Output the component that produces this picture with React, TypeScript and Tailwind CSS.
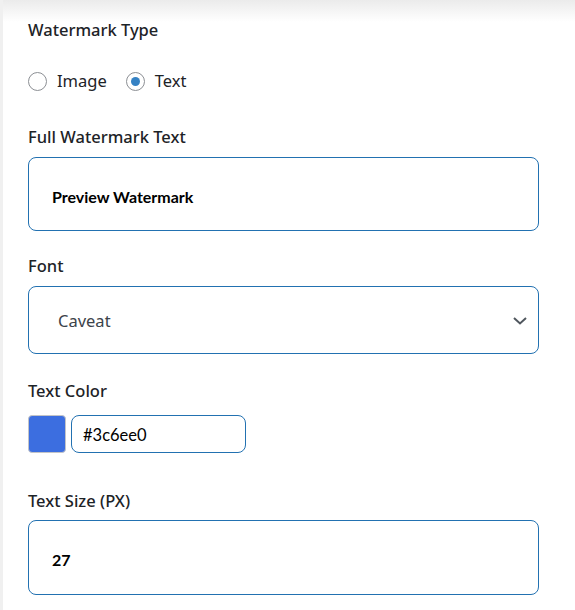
import { useState } from "react"

function Radio({ checked, label, onClick }: { checked: boolean; label: string; onClick: () => void }) {
  return (
    <button type="button" onClick={onClick} className="flex items-center gap-[10px]">
      <span className="flex h-[19px] w-[19px] items-center justify-center rounded-full border border-[#8c8f94] bg-white">
        {checked && <span className="h-[9px] w-[9px] rounded-full bg-[#3582c4]" />}
      </span>
      <span className="text-[16.5px] leading-6 text-[#1d2327]">{label}</span>
    </button>
  )
}

export default function App() {
  const [type, setType] = useState<"image" | "text">("text")

  return (
    <div
      className="min-h-[610px] border-l-[3px] border-[#f0f0f0] bg-[linear-gradient(to_bottom,#ebebeb,#ffffff_22px)] pl-[25px] pr-[36px] pt-[18px] pb-4"
      style={{ fontFamily: '"Noto Sans", "Open Sans", sans-serif' }}
    >
      <div className="text-[16.5px] font-medium leading-6 text-[#1d2327]">Watermark Type</div>
      <div className="mt-[27px] flex items-center gap-[19px]">
        <Radio checked={type === "image"} label="Image" onClick={() => setType("image")} />
        <Radio checked={type === "text"} label="Text" onClick={() => setType("text")} />
      </div>

      <div className="mt-[32px] text-[16.5px] font-medium leading-6 text-[#1d2327]">Full Watermark Text</div>
      <div className="mt-[8px] flex h-[74px] items-center rounded-[8px] border border-[#2271b1] px-[23px] pt-[5px]">
        <span className="font-['Lato',sans-serif] text-[16px] font-bold text-black">Preview Watermark</span>
      </div>

      <div className="mt-[23px] text-[16.5px] font-medium leading-6 text-[#1d2327]">Font</div>
      <div className="mt-[8px] flex h-[68px] items-center justify-between rounded-[8px] border border-[#2271b1] pl-[29px] pr-[11px] pt-[2px]">
        <span className="text-[16.5px] text-[#3c434a]">Caveat</span>
        <svg width="14" height="8" viewBox="0 0 14 8" fill="none">
          <path d="M1 1l6 5.5L13 1" stroke="#50575e" strokeWidth="2" />
        </svg>
      </div>

      <div className="mt-[25px] text-[16.5px] font-medium leading-6 text-[#1d2327]">Text Color</div>
      <div className="mt-[12px] flex items-center gap-[5px]">
        <div className="h-[38px] w-[38px] rounded-[4px] border border-[#c3c4c7] bg-[#3c6ee0]" />
        <div className="flex h-[38px] w-[175px] items-center rounded-[8px] border border-[#2271b1] px-[11px] pt-[2px]">
          <span className="font-['Lato',sans-serif] text-[16.5px] text-black">#3c6ee0</span>
        </div>
      </div>

      <div className="mt-[36px] text-[16.5px] font-medium leading-6 text-[#1d2327]">Text Size (PX)</div>
      <div className="mt-[7px] flex h-[75px] items-center rounded-[8px] border border-[#2271b1] px-[23px] pt-[5px]">
        <span className="font-['Lato',sans-serif] text-[16px] font-bold text-black">27</span>
      </div>
    </div>
  )
}
